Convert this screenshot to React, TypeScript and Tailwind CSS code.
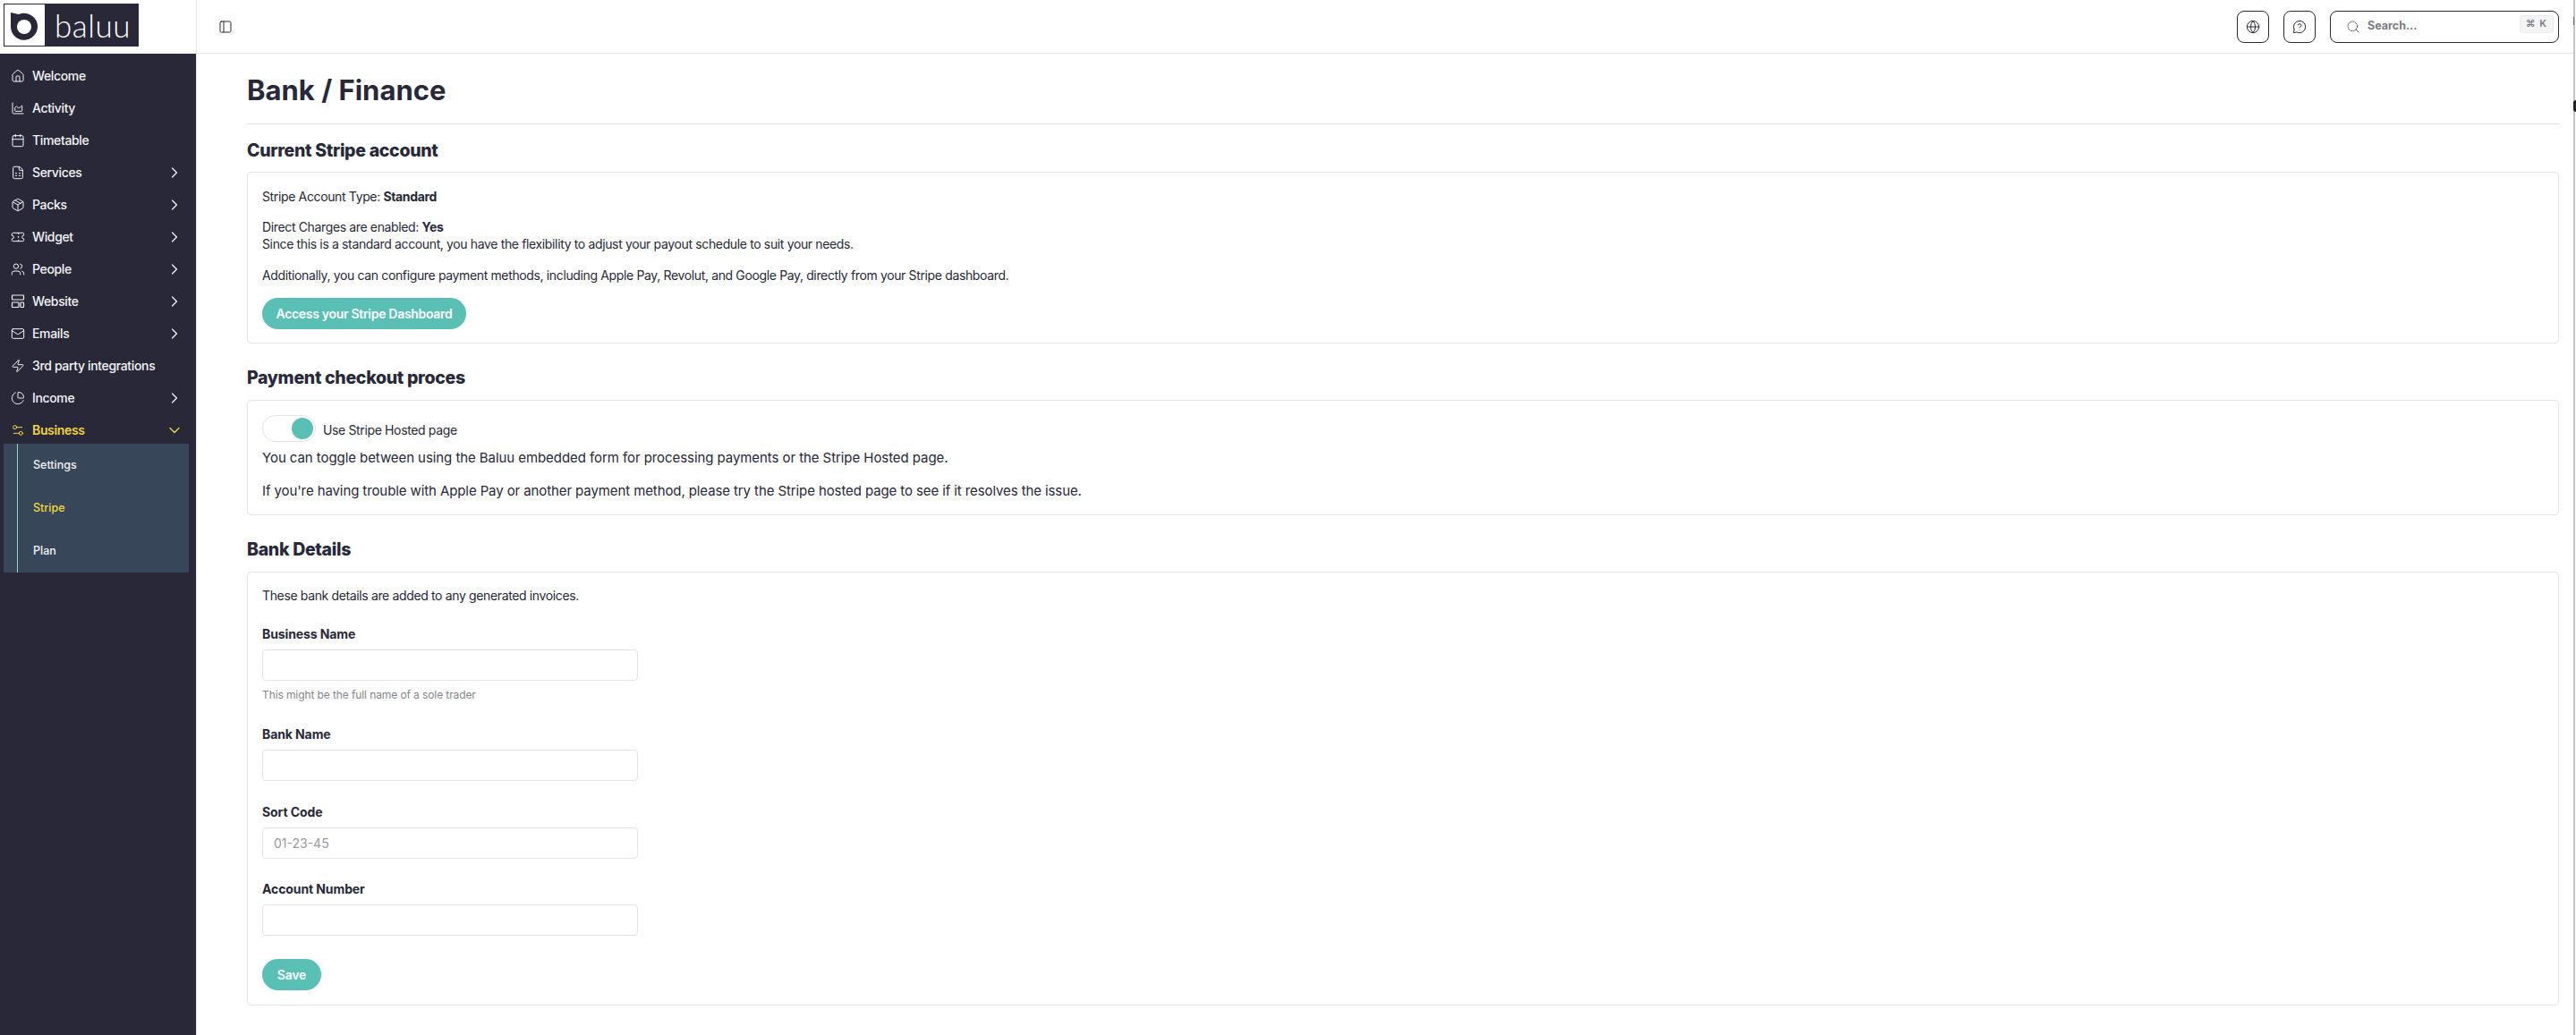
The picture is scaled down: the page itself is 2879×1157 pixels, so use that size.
import { Home, ChartArea, Calendar, FileSpreadsheet, Package, Ticket, Users, Mail, Zap, PieChart, Settings2, ChevronRight, ChevronDown, PanelLeft, Globe, MessageCircleQuestion, Search } from "lucide-react";

function WebsiteIcon({ size = 16 }: { size?: number }) {
  return (
    <svg width={size} height={size} viewBox="0 0 16 16" fill="none" stroke="currentColor" strokeWidth="1.2">
      <rect x="1.5" y="1" width="13" height="5" rx="0.8" />
      <rect x="1.5" y="9" width="7.5" height="5.5" rx="0.8" />
      <rect x="11" y="9" width="3.5" height="5.5" rx="0.8" />
    </svg>
  );
}

const items = [
  { label: "Welcome", Icon: Home },
  { label: "Activity", Icon: ChartArea },
  { label: "Timetable", Icon: Calendar },
  { label: "Services", Icon: FileSpreadsheet, arrow: true },
  { label: "Packs", Icon: Package, arrow: true },
  { label: "Widget", Icon: Ticket, arrow: true },
  { label: "People", Icon: Users, arrow: true },
  { label: "Website", Icon: WebsiteIcon, arrow: true },
  { label: "Emails", Icon: Mail, arrow: true },
  { label: "3rd party integrations", Icon: Zap },
  { label: "Income", Icon: PieChart, arrow: true },
];

function Field({ label, hint, placeholder, className }: { label: string; hint?: string; placeholder?: string; className?: string }) {
  return (
    <div className={className}>
      <label className="block h-[18px] text-[14px] leading-[18px] font-bold tracking-[-0.1px]">{label}</label>
      <input placeholder={placeholder} className="mt-[8px] block h-[35px] w-[420px] rounded-[4px] border border-[#e3e3e6] px-[12px] text-[14px] outline-none placeholder:text-[#9a9aa2]" />
      {hint && <p className="mt-[9px] h-[14px] text-[12px] leading-[14px] tracking-[-0.1px] text-[#85858c]">{hint}</p>}
    </div>
  );
}

export default function App() {
  return (
    <div className="relative flex h-[1157px] w-[2879px] overflow-hidden bg-white text-[#282839] [font-family:Inter,'Liberation_Sans',sans-serif]">
      <div className="flex w-[2876px] shrink-0">
        <aside className="flex w-[220px] shrink-0 flex-col border-r border-[#e5e5e8]">
          <div className="h-[60px] shrink-0 bg-white pl-[4px] pt-[4px]">
            <div className="flex h-[48px] w-[151px] items-center bg-[#282839] pl-[1px]">
              <div className="flex h-[46px] w-[45px] items-center justify-center bg-white">
                <svg width="45" height="46" viewBox="0 0 45 46">
                  <path d="M7 9 L16 11 A15 15 0 1 1 7 25 Z" fill="#282839" />
                  <circle cx="22" cy="25" r="8" fill="white" />
                </svg>
              </div>
              <span className="ml-[11px] text-[35px] leading-[40px] font-light tracking-[0.5px] text-white [font-family:Lato,sans-serif]">baluu</span>
            </div>
          </div>
          <nav className="flex-1 bg-[#282839] pt-[7px] text-[#f4f4f6]">
            {items.map(({ label, Icon, arrow }) => (
              <div key={label} className="flex h-[36px] items-center pl-[12px] pr-[14px]">
                <Icon size={16} strokeWidth={1.5} className="shrink-0" />
                <span className="ml-[8px] flex-1 pb-[1px] text-[14px] font-medium tracking-[-0.35px]">{label}</span>
                {arrow && <ChevronRight size={20} strokeWidth={1.5} />}
              </div>
            ))}
            <div className="flex h-[36px] items-center pl-[12px] pr-[14px] text-[#f5d63d]">
              <Settings2 size={16} strokeWidth={1.5} className="shrink-0" />
              <span className="ml-[8px] flex-1 pb-[1px] text-[14px] font-semibold tracking-[-0.35px]">Business</span>
              <ChevronDown size={20} strokeWidth={1.5} />
            </div>
            <div className="ml-[4px] mt-[-3px] w-[207px] bg-[#374658] pl-[15px]">
              <div className="border-l border-[#7fdccf] pl-[17px] text-[12.5px] font-medium">
                <div className="flex h-[48px] items-center pt-[1px]">Settings</div>
                <div className="flex h-[48px] items-center pt-[1px] text-[#f5d63d]">Stripe</div>
                <div className="flex h-[48px] items-center pt-[1px]">Plan</div>
              </div>
            </div>
          </nav>
        </aside>
        <div className="flex min-w-0 flex-1 flex-col">
          <header className="flex h-[60px] shrink-0 items-center border-b border-[#e5e5e8] pl-[24px] pr-[16px]">
            <PanelLeft size={16} strokeWidth={1.5} />
            <div className="ml-auto flex items-center gap-[16px]">
              <button className="flex h-[36px] w-[36px] items-center justify-center rounded-[8px] border border-[#282839]"><Globe size={16} strokeWidth={1.5} /></button>
              <button className="flex h-[36px] w-[36px] items-center justify-center rounded-[8px] border border-[#282839]"><MessageCircleQuestion size={16} strokeWidth={1.5} /></button>
              <div className="flex h-[36px] w-[256px] items-center rounded-[8px] border border-[#282839] pl-[17px] pr-[5px]">
                <Search size={16} strokeWidth={1.25} className="text-[#55555f]" />
                <span className="ml-[8px] flex-1 text-[12.5px] font-bold text-[#7b7b82]">Search...</span>
                <span className="mt-[4px] flex h-[20px] items-center self-start rounded-[3px] border border-[#ececee] bg-[#f4f4f5] px-[6px] text-[11px] font-semibold tracking-[1px] text-[#7b7b82]">⌘ K</span>
              </div>
            </div>
          </header>
          <main className="flex-1 pl-[56px] pr-[16px]">
            <h1 className="flex h-[79px] items-center border-b border-[#e5e5e8] pt-[4px] text-[31px] font-bold">Bank / Finance</h1>
            <h2 className="mt-[17px] h-[24px] text-[19.5px] leading-[24px] font-extrabold tracking-[-0.3px]">Current Stripe account</h2>
            <section className="mt-[12px] h-[192px] rounded-[4px] border border-[#e5e5e8] px-[16px] pt-[17px] text-[14px] leading-[19px] tracking-[-0.36px]">
              <p>Stripe Account Type: <b>Standard</b></p>
              <p className="mt-[15px]">Direct Charges are enabled: <b>Yes</b></p>
              <p>Since this is a standard account, you have the flexibility to adjust your payout schedule to suit your needs.</p>
              <p className="mt-[16px]">Additionally, you can configure payment methods, including Apple Pay, Revolut, and Google Pay, directly from your Stripe dashboard.</p>
              <button className="mt-[16px] flex h-[35px] w-[228px] items-center justify-center rounded-full bg-[#5ac0b6] text-[14px] font-semibold tracking-[-0.3px] text-white">Access your Stripe Dashboard</button>
            </section>
            <h2 className="mt-[26px] h-[24px] text-[19.5px] leading-[24px] font-extrabold tracking-[-0.3px]">Payment checkout proces</h2>
            <section className="mt-[13px] h-[129px] rounded-[4px] border border-[#e5e5e8] px-[16px] pt-[16px]">
              <div className="flex items-center">
                <div className="flex h-[30px] w-[60px] items-center justify-end rounded-full border border-[#e5e5e8] pr-[2px]"><div className="h-[24px] w-[24px] rounded-full bg-[#5ac0b6]" /></div>
                <span className="ml-[8px] pt-[2px] text-[14px] tracking-[-0.36px]">Use Stripe Hosted page</span>
              </div>
              <p className="mt-[7px] text-[15px] leading-[22px] tracking-[-0.07px]">You can toggle between using the Baluu embedded form for processing payments or the Stripe Hosted page.</p>
              <p className="mt-[15px] text-[15px] leading-[22px] tracking-[-0.1px]">If you're having trouble with Apple Pay or another payment method, please try the Stripe hosted page to see if it resolves the issue.</p>
            </section>
            <h2 className="mt-[26px] h-[24px] text-[19.5px] leading-[24px] font-extrabold tracking-[-0.3px]">Bank Details</h2>
            <section className="mt-[13px] h-[485px] rounded-[4px] border border-[#e5e5e8] px-[16px] pt-[16px]">
              <p className="h-[19px] text-[14px] leading-[19px] tracking-[-0.36px]">These bank details are added to any generated invoices.</p>
              <Field className="mt-[25px]" label="Business Name" hint="This might be the full name of a sole trader" />
              <Field className="mt-[28px]" label="Bank Name" />
              <Field className="mt-[26px]" label="Sort Code" placeholder="01-23-45" />
              <Field className="mt-[25px]" label="Account Number" />
              <button className="mt-[26px] flex h-[35px] w-[66px] items-center justify-center rounded-full bg-[#5ac0b6] text-[14px] font-semibold tracking-[-0.2px] text-white">Save</button>
            </section>
          </main>
        </div>
      </div>
      <div className="relative w-[3px] bg-white">
        <div className="absolute inset-y-0 left-0 w-[2px] bg-[#c4c4c4]" />
        <div className="absolute left-0 top-[19px] h-[9px] w-[1px] bg-[#666]" />
        <div className="absolute left-0 top-[112px] h-[13px] w-[3px] rounded-l-full bg-[#222]" />
      </div>
    </div>
  );
}
